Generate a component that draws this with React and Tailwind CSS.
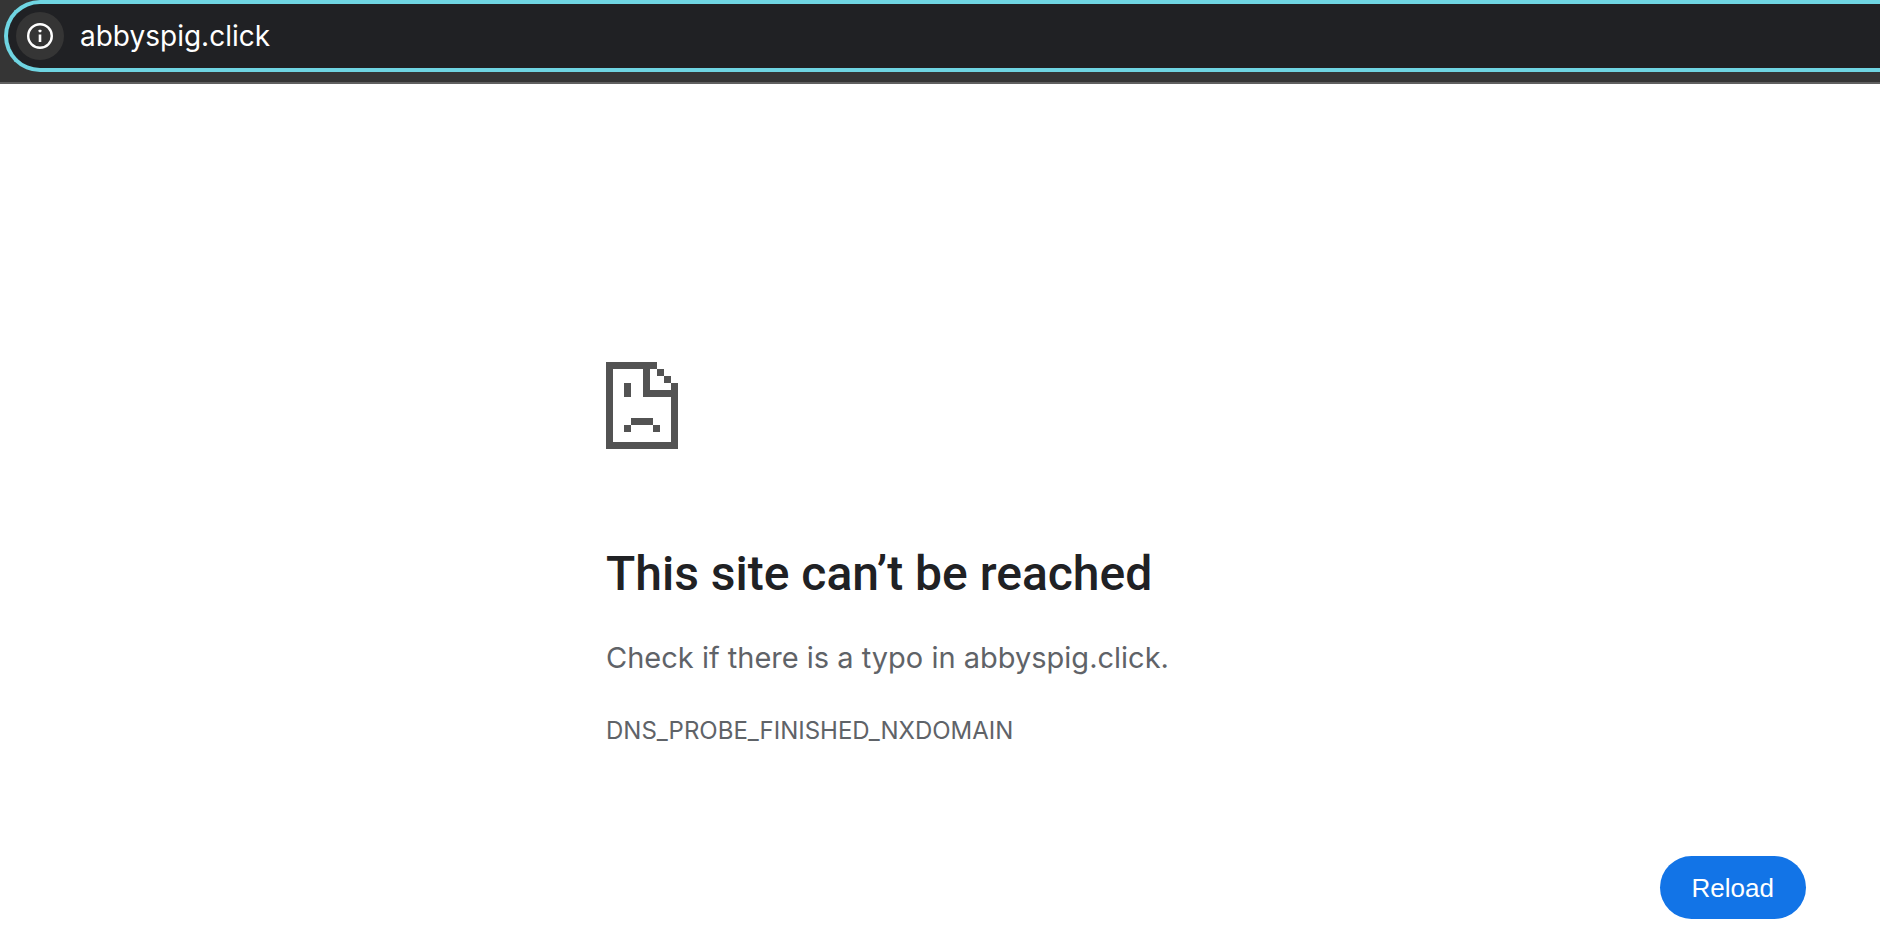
function InfoIcon() {
  return (
    <svg viewBox="0 0 26 26" className="size-[26px]" fill="none" aria-hidden="true">
      <circle cx="13" cy="13" r="11.8" stroke="#fff" strokeWidth="2.4" />
      <rect x="11.7" y="11.5" width="2.6" height="7.5" fill="#fff" />
      <rect x="11.6" y="6.7" width="2.8" height="2.5" rx="0.6" fill="#fff" />
    </svg>
  );
}

function SadPageIcon() {
  return (
    <svg
      viewBox="0 0 72 87"
      className="h-[87px] w-[72px]"
      fill="#535353"
      shapeRendering="crispEdges"
      aria-hidden="true"
    >
      <path d="M0 0H51V7H44V28H65V21H72V87H0ZM7 7V80H65V35H37V7Z" />
      <path d="M51 7h7v7h-7zM58 14h7v7h-7z" />
      <path d="M18 21h7v14h-7z" />
      <path d="M25 56h22v7h7v7h-7v-7H25v7h-7v-7h7z" />
    </svg>
  );
}

function AddressBar() {
  return (
    <header className="border-b-2 border-[#606060] bg-[#353535] pb-2.5 pl-1">
      <div className="flex h-[72px] items-center gap-4 rounded-l-full border-4 border-r-0 border-[#6fd5e2] bg-[#202124] pl-2">
        <button
          type="button"
          aria-label="View site information"
          className="flex size-12 shrink-0 items-center justify-center rounded-full bg-[#353535]"
        >
          <InfoIcon />
        </button>
        <input
          type="text"
          aria-label="Address"
          defaultValue="abbyspig.click"
          spellCheck={false}
          className="min-w-0 flex-1 bg-transparent font-['Inter',sans-serif] text-[28px] leading-9 text-white outline-none"
        />
      </div>
    </header>
  );
}

export default function App() {
  return (
    <div className="flex min-h-screen flex-col bg-white">
      <AddressBar />
      <main className="flex flex-col pt-[278px] pr-[74px] pb-8 pl-[606px] font-['Inter',sans-serif] text-[#5f6368]">
        <SadPageIcon />
        <h1 className="mt-24 font-['Roboto',sans-serif] text-[48px] leading-[58px] font-medium text-[#202124]">
          This site can’t be reached
        </h1>
        <p className="mt-9 text-[29px] leading-[38px]">
          Check if there is a typo in abbyspig.click.
        </p>
        <p className="mt-[38px] text-[24px] leading-8">DNS_PROBE_FINISHED_NXDOMAIN</p>
        <button
          type="button"
          className="mt-[109px] h-[63px] self-end rounded-full bg-[#1274e7] px-8 font-['Liberation_Sans',sans-serif] text-[26px] leading-8 text-white"
        >
          Reload
        </button>
      </main>
    </div>
  );
}
